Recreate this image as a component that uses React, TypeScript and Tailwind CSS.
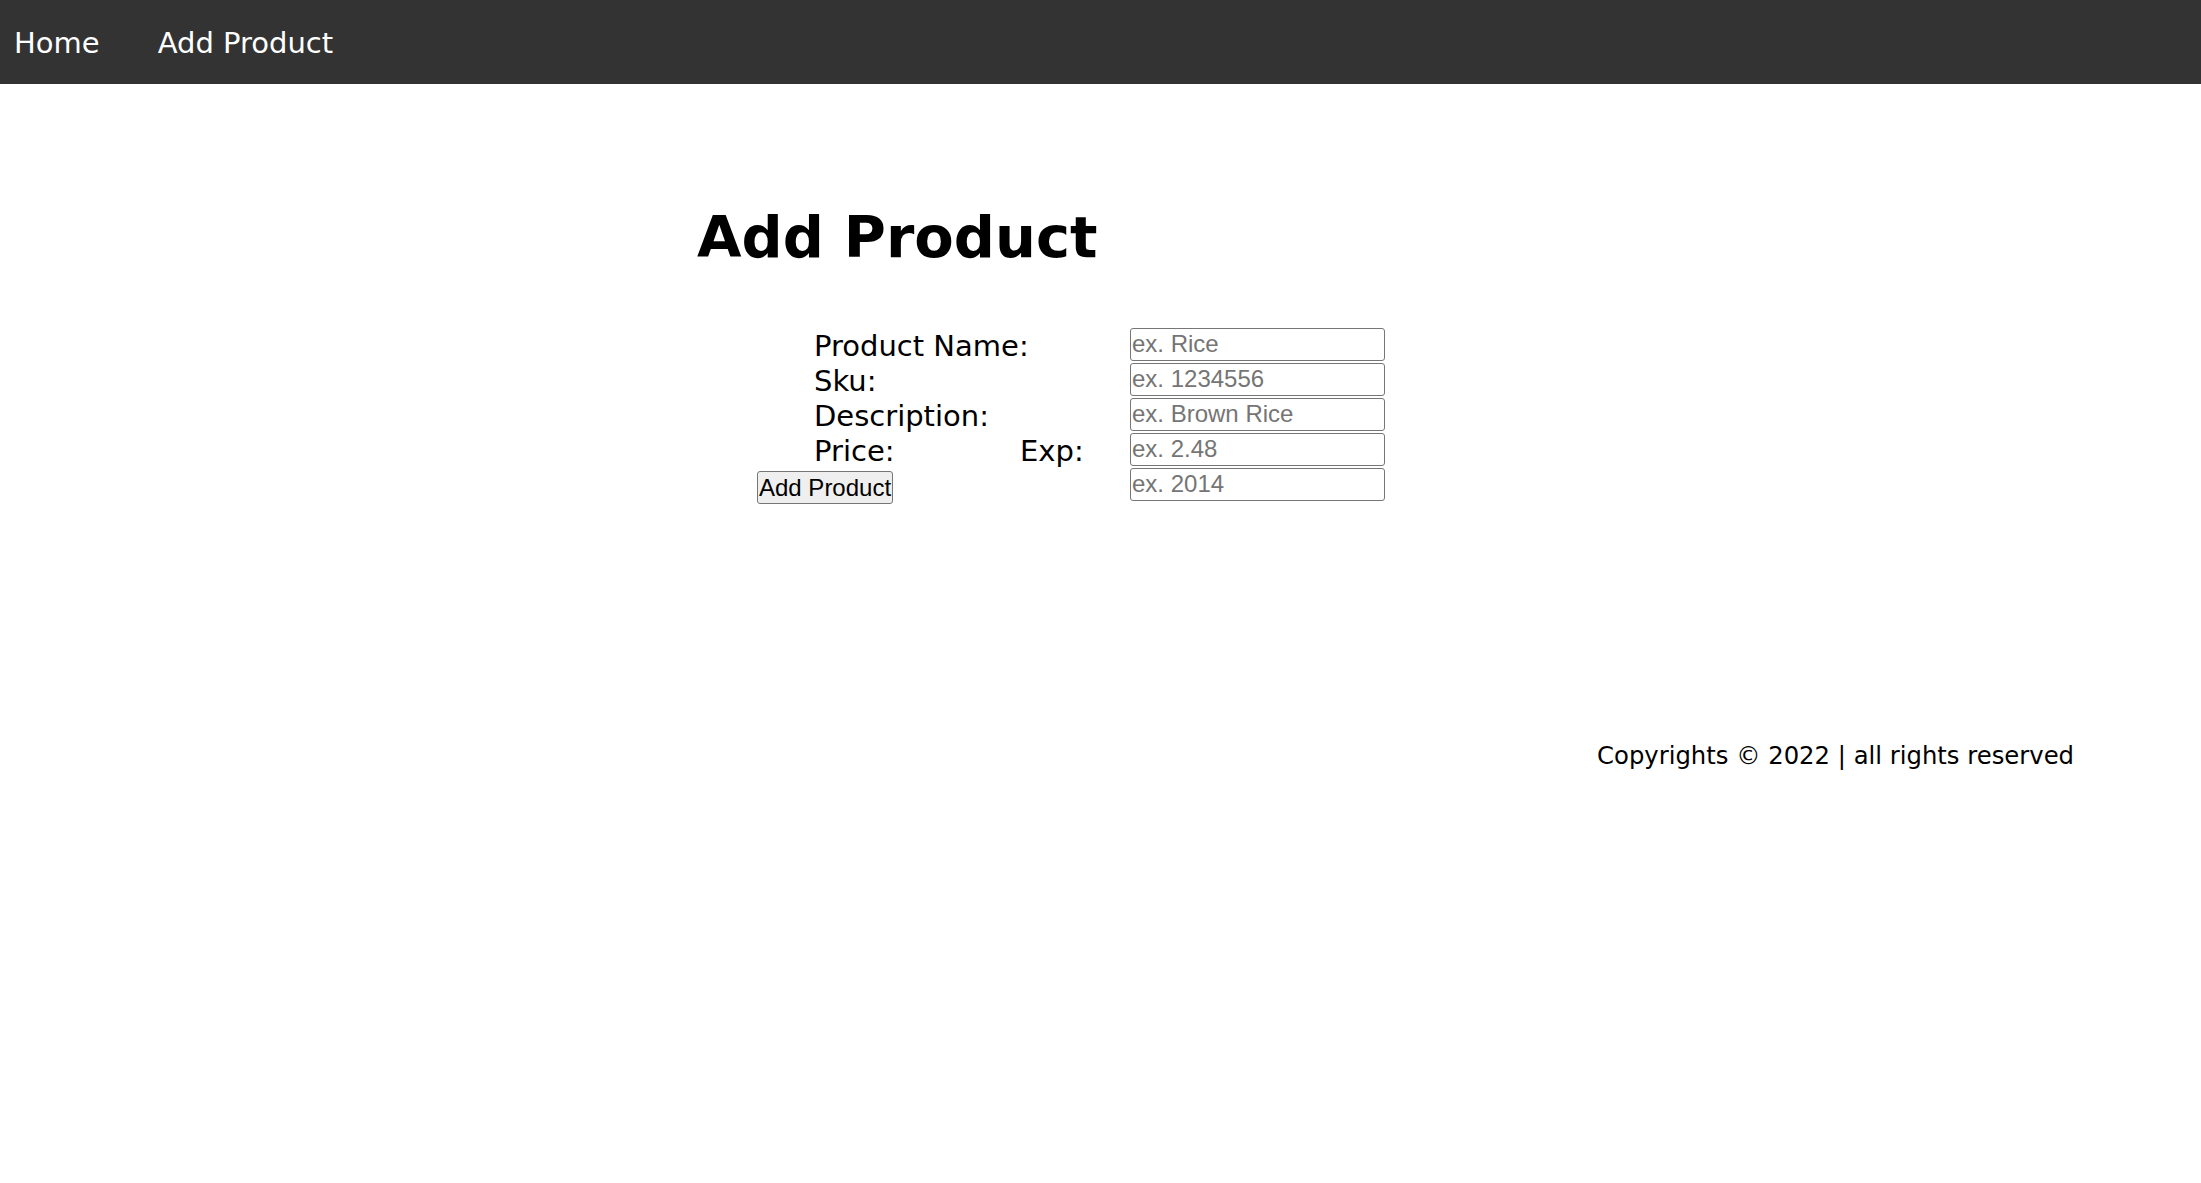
import React from "react";

const labelFont = { fontFamily: '"DejaVu Sans", Verdana, sans-serif' };
const arial = { fontFamily: '"Liberation Sans", Arial, sans-serif' };

export default function App() {
  const placeholders = ["ex. Rice", "ex. 1234556", "ex. Brown Rice", "ex. 2.48", "ex. 2014"];
  return (
    <div className="min-h-screen bg-white text-black" style={labelFont}>
      <nav className="h-[84px] bg-[#333333] flex items-center pl-[14px] pt-[3px] text-[29px] text-white">
        <a className="mr-[58px]">Home</a>
        <a>Add Product</a>
      </nav>

      <main>
        <h1 className="ml-[697px] mt-[121px] text-[57.5px] font-bold leading-[1.164]">Add Product</h1>

        <form className="ml-[703px] mt-[56px] flex" onSubmit={(e) => e.preventDefault()}>
          <div className="pl-[54px] w-[427px] flex flex-col text-[29px] leading-[35px] pt-[1px]">
            <div className="pl-[57px]">Product Name:</div>
            <div className="pl-[57px]">Sku:</div>
            <div className="pl-[57px]">Description:</div>
            <div className="pl-[57px] flex">
              <span className="w-[206px]">Price:</span>
              <span>Exp:</span>
            </div>
            <div className="h-[35px] flex items-center pt-[3px]">
              <button
                type="submit"
                className="h-[33px] px-[1px] whitespace-nowrap bg-[#efefef] border border-[#767676] rounded-[3px] text-[24px] leading-none text-black"
                style={arial}
              >
                Add Product
              </button>
            </div>
          </div>
          <div className="flex flex-col gap-[2px]">
            {placeholders.map((p) => (
              <input
                key={p}
                placeholder={p}
                className="h-[33px] w-[255px] border border-[#767676] rounded-[3px] px-[1px] text-[24px] placeholder:text-[#757575] outline-none"
                style={arial}
              />
            ))}
          </div>
        </form>
      </main>

      <footer className="mt-[234px] pr-[127px] text-right text-[24.3px]">
        Copyrights © 2022 | all rights reserved
      </footer>
    </div>
  );
}
